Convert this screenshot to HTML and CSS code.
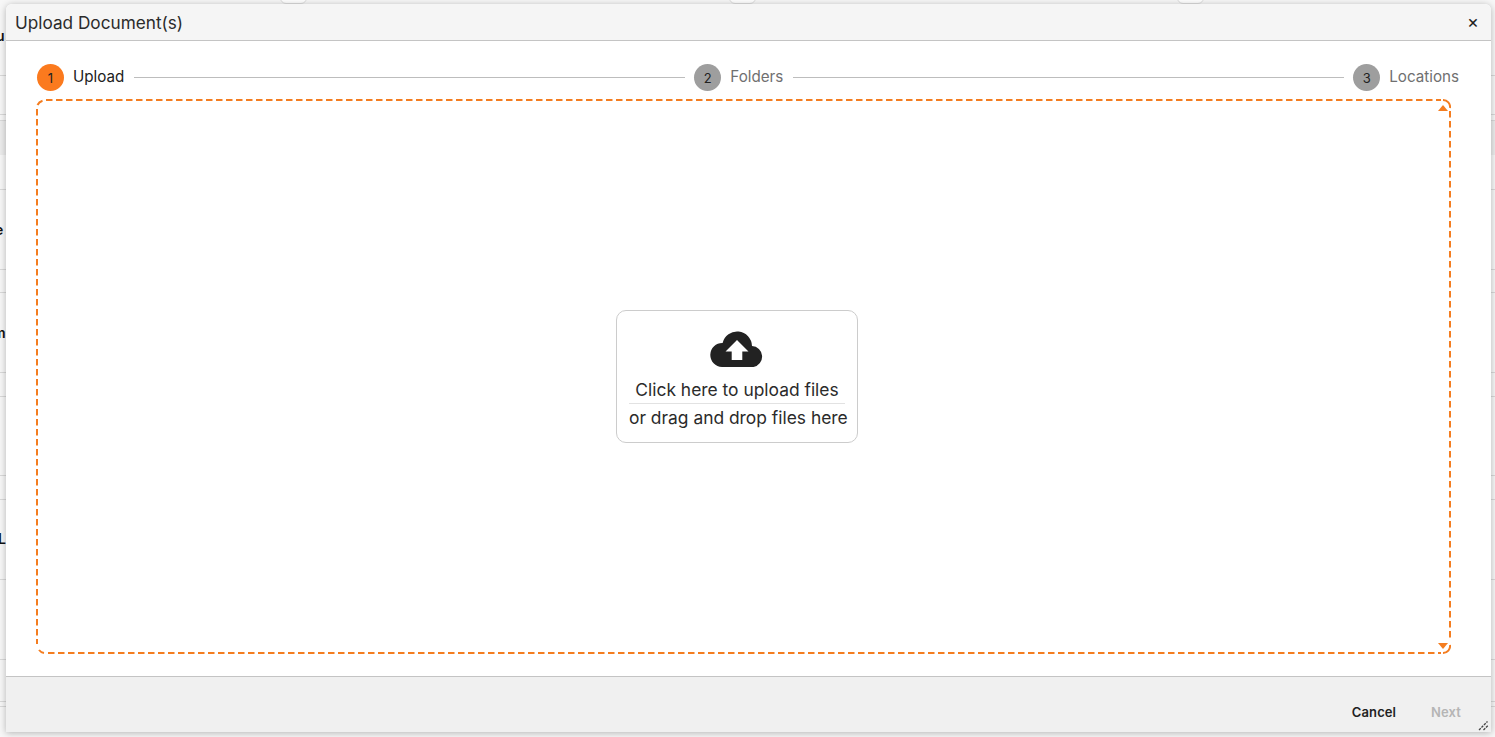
FILE: index.html
```html
<!DOCTYPE html>
<html lang="en">
<head>
<meta charset="utf-8">
<title>Upload Document(s)</title>
<link rel="stylesheet" href="styles.css">
</head>
<body>
<div class="backdrop">
  <span class="tab tab-a"></span><span class="tab tab-b"></span><span class="tab tab-c"></span>
  <span class="bg-letter l-u">u</span>
  <span class="bg-letter l-e">e</span>
  <span class="bg-letter l-m">m</span>
  <span class="bg-letter l-l">L</span>
  <span class="band"></span>
  <span class="rule r1"></span><span class="rule r2"></span><span class="rule r3"></span><span class="rule r4"></span>
  <span class="rule r5"></span><span class="rule r6"></span><span class="rule r7"></span><span class="rule r8"></span>
  <span class="rule r9"></span><span class="rule r10"></span><span class="rule r11"></span><span class="rule r12"></span>
  <span class="rule r13"></span><span class="rule r14"></span>
</div>
<section class="modal">
  <header class="modal-head">
    <h1 class="modal-title">Upload Document(s)</h1>
    <span class="close">×</span>
  </header>
  <div class="modal-body">
    <ol class="stepper">
      <li class="step active"><span class="num">1</span><span class="label">Upload</span></li>
      <li class="line"></li>
      <li class="step"><span class="num">2</span><span class="label">Folders</span></li>
      <li class="line"></li>
      <li class="step"><span class="num">3</span><span class="label">Locations</span></li>
    </ol>
    <div class="dropzone">
      <svg class="dash" width="1415" height="555" viewBox="0 0 1415 555" aria-hidden="true">
        <path d="M10 1H1405M12 554H1405M1 10V545M1414 12V542"/>
        <path d="M1.500 6A8 8 0 0 1 6.500 1.700M1407 1A7 7 0 0 1 1414 9M1414 546A7 7 0 0 1 1407 554M3 551A8 8 0 0 0 8 554" class="dash-c"/>
      </svg>
      <span class="tri tri-up"></span>
      <div class="upload-card">
        <svg class="cloud" width="54" height="36" viewBox="0 0 54 36" aria-hidden="true">
          <path fill="#222" d="M12 36A12 12 0 0 1 12.600 12A14.900 14.900 0 0 1 42 15A10.600 10.600 0 0 1 43.500 36Z"/>
          <path fill="#fff" d="M27 9 38.500 20.500H32.300V29H21.700V20.500H15.500Z"/>
        </svg>
        <div class="card-line first">Click here to upload files</div>
        <div class="card-line">or drag and drop files here</div>
      </div>
      <span class="tri tri-down"></span>
    </div>
  </div>
  <footer class="modal-foot">
    <button class="btn" type="button">Cancel</button>
    <button class="btn disabled" type="button">Next</button>
    <svg class="grip" width="11" height="11" viewBox="0 0 11 11" aria-hidden="true">
      <path d="M1 10 9.500 1.500M5.500 10 10 5.500" stroke="#444" stroke-width="1.300" stroke-dasharray="2.500 1" fill="none"/>
    </svg>
  </footer>
</section>
</body>
</html>
```
FILE: styles.css
```css
* { box-sizing: border-box; }
html, body { margin: 0; height: 100%; overflow: hidden; }
body {
  background: #fff;
  font-family: Inter, "Liberation Sans", sans-serif;
  color: #222;
}
.backdrop { position: absolute; inset: 0; overflow: hidden; background: #f7f7f7; }
.tab {
  position: absolute; top: -8px; width: 27px; height: 12px;
  border: 1px solid #ddd; border-radius: 6px; background: #fff;
}
.tab-a { left: 280px; }
.tab-b { left: 729px; }
.tab-c { left: 1177px; }
.bg-letter { position: absolute; font-size: 14px; font-weight: 600; color: #111; line-height: 16px; }
.l-u { left: -4px; top: 28px; }
.l-e { left: -5px; top: 222px; }
.l-m { left: -7px; top: 325px; }
.l-l { left: -2px; top: 531px; }
.band { position: absolute; left: 0; top: 120px; width: 100%; height: 35px; background: #ececec; }
.rule { position: absolute; left: 0; width: 100%; height: 1px; background: #d9d9d9; }
.r1 { top: 75px; } .r2 { top: 114px; } .r3 { top: 120px; } .r4 { top: 189px; }
.r5 { top: 269px; } .r6 { top: 292px; } .r7 { top: 372px; } .r8 { top: 396px; }
.r9 { top: 475px; } .r10 { top: 499px; } .r11 { top: 579px; } .r12 { top: 659px; }
.r13 { top: 701px; } .r14 { top: 706px; }

.modal {
  position: absolute; left: 6px; top: 4px; width: 1485px; height: 728px;
  display: flex; flex-direction: column;
  background: #fff;
  border-radius: 6px 6px 0 0;
  box-shadow: 0 1px 7px rgba(0,0,0,.28);
  overflow: hidden;
}
.modal-head {
  flex: none; height: 37px; padding: 1px 12px 0 9px;
  display: flex; align-items: center; justify-content: space-between;
  background: #f5f5f5; border-bottom: 1px solid #c4c4c4;
}
.modal-title { margin: 0; font-size: 17.200px; font-weight: 400; color: #2b2b2b; }
.close { font-size: 18px; line-height: 16px; color: #222; margin-top: -2px; }
.modal-body { flex: 1; min-height: 0; padding: 22px 32px 22px 31px; display: flex; flex-direction: column; }
.stepper {
  list-style: none; margin: 0 0 8px; padding: 0;
  display: flex; align-items: center; height: 28px;
}
.step { display: flex; align-items: center; gap: 9px; }
.num {
  width: 27px; height: 27px; border-radius: 50%;
  display: flex; align-items: center; justify-content: center;
  background: #9e9e9e; color: #222; font-size: 13px; padding-top: 2px;
}
.step.active .num { background: #fb7a1e; }
.label { font-size: 15.200px; color: #707070; margin-top: -1px; }
.step.active .label { color: #222; }
.line { flex: 1; height: 1px; margin: 0 9px 0 10px; background: #bdbdbd; }
.dropzone {
  position: relative; flex: 1; min-height: 0; margin: 0 8px 0 -1px; padding: 0 14px 0 1px;
  display: flex; align-items: center; justify-content: center;
}
.dash { position: absolute; left: 0; top: 0; fill: none; stroke: #f47d20; stroke-width: 2; stroke-dasharray: 6.500 3.500; }
.dash .dash-c { stroke-dasharray: none; }
.tri { position: absolute; right: 3px; width: 0; height: 0; border-left: 5px solid transparent; border-right: 5px solid transparent; }
.tri-up { top: 6px; border-bottom: 6px solid #f47d20; }
.tri-down { bottom: 5px; border-top: 6px solid #f47d20; }
.upload-card {
  width: 242px; height: 133px; padding: 20px 12px 0;
  display: flex; flex-direction: column; align-items: center;
  border: 1px solid #ccc; border-radius: 10px; background: #fff;
  margin-top: -1px;
}
.cloud { flex: none; margin-bottom: 10px; }
.card-line { width: 100%; text-align: center; font-size: 17.400px; line-height: 28px; color: #2b2b2b; white-space: nowrap; }
.card-line.first { border-bottom: 1px solid #e2e2e2; line-height: 26px; }
.modal-foot {
  position: relative; flex: none; height: 56px; padding: 0 30px 0 0;
  display: flex; align-items: flex-end; justify-content: flex-end; gap: 35px;
  background: #f0f0f0; border-top: 1px solid #c4c4c4;
}
.btn {
  border: 0; background: none; padding: 0 0 12px;
  font: 600 13px/16px Inter, "Liberation Sans", sans-serif; letter-spacing: .1px; color: #222;
}
.btn.disabled { color: #b5b5b5; }
.grip { position: absolute; right: 2px; bottom: 1px; }
```
